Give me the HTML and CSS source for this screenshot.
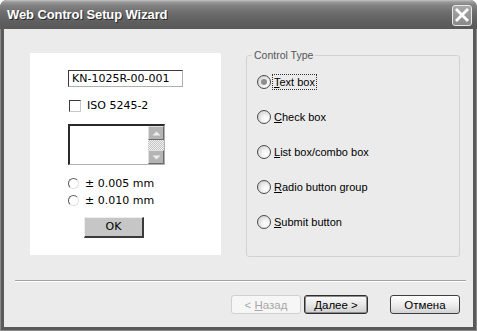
FILE: index.html
```html
<!DOCTYPE html>
<html>
<head>
<meta charset="utf-8">
<link rel="stylesheet" href="styles.css">
</head>
<body>
<div class="window">
  <div class="titlebar">
    <span class="title">Web Control Setup Wizard</span>
    <span class="close"><svg width="14" height="14" viewBox="0 0 14 14"><path d="M2 2 L12 12 M12 2 L2 12" stroke="#fff" stroke-width="2.8" stroke-linecap="square"/></svg></span>
  </div>
  <div class="client">
    <div class="main">
      <div class="panel">
        <div class="textfield">KN-1025R-00-001</div>
        <div class="chk"><span class="box"></span><span>ISO 5245-2</span></div>
        <div class="listbox">
          <div class="scroll">
            <span class="sbtn"><svg width="9" height="5" viewBox="0 0 9 5"><path d="M0.5 4.5 L4.5 0.5 L8.5 4.5 Z" fill="#eee"/></svg></span>
            <span class="track"></span>
            <span class="sbtn"><svg width="9" height="5" viewBox="0 0 9 5"><path d="M0.5 0.5 L4.5 4.5 L8.5 0.5 Z" fill="#eee"/></svg></span>
          </div>
        </div>
        <div class="opts">
          <div class="opt"><span class="rd"></span><span>± 0.005 mm</span></div>
          <div class="opt"><span class="rd"></span><span>± 0.010 mm</span></div>
        </div>
        <div class="okbtn">OK</div>
      </div>
      <fieldset class="group">
        <legend>Control Type</legend>
        <div class="choice selected"><span class="radio"></span><span class="lbl focus"><u>T</u>ext box</span></div>
        <div class="choice"><span class="radio"></span><span class="lbl"><u>C</u>heck box</span></div>
        <div class="choice"><span class="radio"></span><span class="lbl"><u>L</u>ist box/combo box</span></div>
        <div class="choice"><span class="radio"></span><span class="lbl"><u>R</u>adio button group</span></div>
        <div class="choice"><span class="radio"></span><span class="lbl"><u>S</u>ubmit button</span></div>
      </fieldset>
    </div>
    <div class="sep"></div>
    <div class="buttons">
      <div class="btn disabled"><span>&lt; <u>Н</u>азад</span></div>
      <div class="btn default"><span><u>Д</u>алее &gt;</span></div>
      <div class="btn cancel"><span>Отмена</span></div>
    </div>
  </div>
</div>
</body>
</html>
```

FILE: styles.css
```css
html, body {
  margin: 0;
  padding: 0;
  background: #ffffff;
}
.window {
  width: 477px;
  height: 331px;
  box-sizing: border-box;
  background: #5a5a5a;
  padding: 0 3px 3px 3px;
  display: flex;
  flex-direction: column;
  border-radius: 7px 7px 0 0;
  border-left: 1px solid #8a8a8a;
  border-right: 1px solid #8a8a8a;
  border-bottom: 1px solid #8a8a8a;
}
.titlebar {
  height: 29px;
  flex: none;
  margin: 0 -4px;
  border-radius: 7px 7px 0 0;
  background: linear-gradient(#c4c4c4 0px, #9a9a9a 2px, #848484 5px, #6e6e6e 12px, #5e5e5e 22px, #595959 29px);
  display: flex;
  align-items: center;
  justify-content: space-between;
  padding: 0 5px 0 7px;
  box-sizing: border-box;
}
.title {
  font-family: "Liberation Sans", Arial, sans-serif;
  font-weight: bold;
  font-size: 13px;
  color: #ffffff;
  text-shadow: 1px 1px 0 #2a2a2a;
  letter-spacing: -0.1px;
}
.close {
  width: 20px;
  height: 21px;
  box-sizing: border-box;
  border: 1px solid #e8e8e8;
  border-radius: 3px;
  background: linear-gradient(#a8a8a8, #8a8a8a);
  display: flex;
  align-items: center;
  justify-content: center;
  margin-top: 1px;
}
.client {
  flex: 1;
  background: #ebebeb;
  display: flex;
  flex-direction: column;
}
.main {
  display: flex;
  align-items: flex-start;
  padding: 20px 0 0 26px;
  gap: 25px;
}
.panel {
  margin-top: 4px;
  width: 191px;
  height: 202px;
  background: #ffffff;
  box-sizing: border-box;
  padding: 17px 0 0 38px;
  display: flex;
  flex-direction: column;
  align-items: flex-start;
  font-family: "DejaVu Sans", Verdana, sans-serif;
  font-size: 11px;
  color: #000;
}
.textfield {
  width: 115px;
  height: 17px;
  box-sizing: border-box;
  border-top: 1px solid #3a3a3a;
  border-left: 1px solid #3a3a3a;
  border-right: 1px solid #b0b0b0;
  border-bottom: 1px solid #b0b0b0;
  padding-left: 3px;
  line-height: 15px;
}
.chk {
  margin-top: 13px;
  display: flex;
  align-items: center;
  gap: 6px;
  height: 12px;
  line-height: 12px;
}
.box {
  width: 12px;
  height: 12px;
  box-sizing: border-box;
  margin-left: 1px;
  border-top: 1px solid #3a3a3a;
  border-left: 1px solid #3a3a3a;
  border-right: 1px solid #c8c8c8;
  border-bottom: 1px solid #c8c8c8;
  background: #fff;
}
.listbox {
  margin-top: 12px;
  width: 97px;
  height: 41px;
  box-sizing: border-box;
  border-top: 2px solid #2a2a2a;
  border-left: 2px solid #2a2a2a;
  border-right: 1px solid #b0b0b0;
  border-bottom: 1px solid #b0b0b0;
  display: flex;
  justify-content: flex-end;
}
.scroll {
  width: 16px;
  display: flex;
  flex-direction: column;
}
.sbtn {
  height: 14px;
  flex: none;
  background: #b4b4b4;
  box-sizing: border-box;
  border-top: 1px solid #e0e0e0;
  border-left: 1px solid #e0e0e0;
  border-right: 1px solid #6a6a6a;
  border-bottom: 1px solid #6a6a6a;
  display: flex;
  align-items: center;
  justify-content: center;
}
.track {
  flex: 1;
  background-color: #e8e8e8;
  background-image: repeating-conic-gradient(#c4c4c4 0 25%, #f0f0f0 0 50%);
  background-size: 2px 2px;
}
.opts {
  margin-top: 10px;
  display: flex;
  flex-direction: column;
}
.opt {
  height: 17px;
  display: flex;
  align-items: center;
  gap: 6px;
}
.rd {
  width: 11px;
  height: 11px;
  box-sizing: border-box;
  border-radius: 50%;
  border-top: 1px solid #5a5a5a;
  border-left: 1px solid #5a5a5a;
  border-right: 1px solid #e0e0e0;
  border-bottom: 1px solid #e0e0e0;
  background: #fff;
}
.okbtn {
  margin-top: 8px;
  margin-left: 16px;
  width: 60px;
  height: 21px;
  box-sizing: border-box;
  background: #c6c6c6;
  border-top: 1px solid #eeeeee;
  border-left: 1px solid #eeeeee;
  border-right: 2px solid #3a3a3a;
  border-bottom: 2px solid #3a3a3a;
  text-align: center;
  line-height: 18px;
}
.group {
  margin: 0;
  width: 214px;
  height: 208px;
  box-sizing: border-box;
  border: 1px solid #d2d2d2;
  border-radius: 3px;
  padding: 0 0 0 10px;
  display: flex;
  flex-direction: column;
  gap: 19px;
  font-family: "Liberation Sans", Arial, sans-serif;
  font-size: 11px;
}
.group legend {
  margin-left: -5px;
  padding: 0 2px;
  font-family: "Liberation Sans", Arial, sans-serif;
  font-size: 10.5px;
  color: #555;
  line-height: 13px;
}
.choice {
  height: 16px;
  display: flex;
  align-items: center;
  gap: 1px;
  color: #000;
}
.choice:first-of-type {
  margin-top: 12px;
}
.radio {
  width: 14px;
  height: 14px;
  box-sizing: border-box;
  border-radius: 50%;
  border: 1px solid #4a4a4a;
  background: radial-gradient(circle at 65% 65%, #ffffff 0, #f2f2f2 35%, #d2d2d2 80%);
  display: flex;
  align-items: center;
  justify-content: center;
}
.selected .radio::after {
  content: "";
  width: 6px;
  height: 6px;
  border-radius: 50%;
  background: #8e8e8e;
}
.lbl {
  padding: 0 1px;
  line-height: 14px;
  border: 1px dotted transparent;
}
.lbl.focus {
  border-color: #333;
}
.sep {
  margin: 23px 7px 0 11px;
  height: 1px;
  background: #a2a2a2;
  border-bottom: 1px solid #ffffff;
}
.buttons {
  margin-top: 13px;
  display: flex;
  justify-content: flex-end;
  padding-right: 13px;
  font-family: "Liberation Sans", Arial, sans-serif;
  font-size: 11.5px;
}
.btn {
  height: 19px;
  box-sizing: border-box;
  border-radius: 3px;
  display: flex;
  align-items: center;
  justify-content: center;
  color: #000;
}
.disabled {
  width: 70px;
  border: 1px solid #d0d0d0;
  background: #f6f6f6;
  color: #a8a8a8;
}
.default {
  width: 64px;
  margin-left: 3px;
  border: 1px solid #2e2e2e;
  box-shadow: inset 0 0 0 1px #8c8c8c;
  background: linear-gradient(#fafafa, #e6e6e6 55%, #cfcfcf);
}
.cancel {
  width: 70px;
  margin-left: 22px;
  border: 1px solid #3e3e3e;
  background: linear-gradient(#ffffff, #ececec 55%, #d2d2d2);
}
```
